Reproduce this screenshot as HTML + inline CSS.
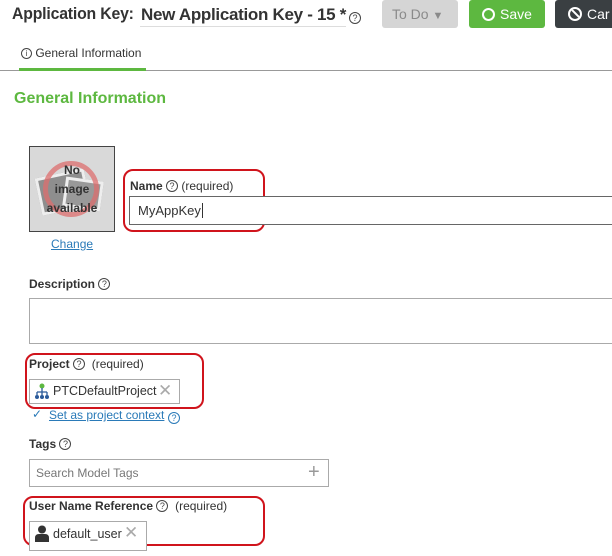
<!DOCTYPE html>
<html><head><meta charset="utf-8"><style>
*{margin:0;padding:0;box-sizing:border-box}
body{width:612px;height:556px;overflow:hidden;background:#fff;font-family:"Liberation Sans",sans-serif;color:#333;position:relative}
.a{position:absolute;white-space:nowrap}
.q{display:inline-block;width:12px;height:12px;border:1px solid #444;border-radius:50%;font-size:9px;line-height:10px;text-align:center;font-weight:normal;color:#444;vertical-align:1px}
.lbl{font-size:12px;color:#333}
.lbl b{font-weight:bold}
.red{position:absolute;border:2px solid #d0141c;border-radius:10px}
.box{position:absolute;border:1px solid #aaa;background:#fff}
</style></head><body>
<div class="a" style="left:12px;top:4px;font-size:17px;font-weight:bold;color:#333;letter-spacing:-0.2px;transform:scaleX(0.93);transform-origin:0 0">Application Key:</div>
<div class="a" style="left:140px;top:6px;width:206px;height:21px;border-bottom:1px solid #ddd"></div>
<div class="a" style="left:141px;top:5px;font-size:17px;font-weight:bold;color:#333;letter-spacing:-0.3px">New Application Key - 15 *</div>
<div class="a" style="left:349px;top:9px"><span class="q">?</span></div>
<div class="a" style="left:382px;top:0;width:76px;height:28px;background:#d5d5d5;border-radius:3px;color:#8a8a8a;font-size:14px;line-height:28px;padding-left:10px">To Do <span style="font-size:11px">&#9660;</span></div>
<div class="a" style="left:469px;top:0;width:76px;height:28px;background:#5db840;border-radius:3px;color:#fff;font-size:14px;line-height:28px;padding-left:13px"><span style="display:inline-block;width:13px;height:13px;border:2px solid #fff;border-radius:50%;vertical-align:-2px;margin-right:5px"></span>Save</div>
<div class="a" style="left:555px;top:0;width:80px;height:28px;background:#3a3f42;border-radius:3px;color:#fff;font-size:14px;line-height:28px;padding-left:13px"><span style="display:inline-block;width:14px;height:14px;border:2px solid #fff;border-radius:50%;vertical-align:-2px;margin-right:5px;position:relative;overflow:hidden"><span style="position:absolute;left:-2px;top:4px;width:16px;height:2px;background:#fff;transform:rotate(45deg)"></span></span>Car</div>
<div class="a" style="left:21px;top:46px;font-size:12px;color:#333"><span class="q" style="width:11px;height:11px;font-size:8px;line-height:9px">i</span> General Information</div>
<div class="a" style="left:0;top:70px;width:612px;height:1px;background:#999"></div>
<div class="a" style="left:19px;top:68px;width:127px;height:3px;background:#5db840"></div>
<div class="a" style="left:14px;top:90px;font-size:16px;font-weight:bold;color:#5db840">General Information</div>
<div class="a" style="left:29px;top:146px;width:86px;height:86px;border:1px solid #444;background:#d9d9d9;overflow:hidden">
<div style="position:absolute;left:8px;top:26px;width:50px;height:38px;background:#8e8e8e;transform:rotate(-12deg);border:3px solid #eee"></div>
<div style="position:absolute;left:34px;top:32px;width:38px;height:30px;background:#999;transform:rotate(8deg);border:3px solid #eee"></div>
<div style="position:absolute;left:13px;top:14px;width:56px;height:56px;border:5px solid rgba(220,110,110,.75);border-radius:50%"></div>
<div style="position:absolute;left:0;top:14px;width:84px;text-align:center;font-size:12px;font-weight:bold;line-height:19px;color:#333">No<br>image<br>available</div>
</div>
<div class="a" style="left:51px;top:237px;font-size:12px;color:#2a7ab8;text-decoration:underline">Change</div>
<div class="red" style="left:123px;top:169px;width:142px;height:63px"></div>
<div class="a lbl" style="left:130px;top:179px"><b>Name</b> <span class="q">?</span> (required)</div>
<div class="box" style="left:129px;top:196px;width:490px;height:29px;border-color:#666"></div>
<div class="a" style="left:138px;top:203px;font-size:13px;color:#333">MyAppKey<span style="border-left:1px solid #333;margin-left:1px"></span></div>
<div class="a lbl" style="left:29px;top:277px"><b>Description</b> <span class="q">?</span></div>
<div class="box" style="left:29px;top:298px;width:590px;height:46px"></div>
<div class="red" style="left:25px;top:353px;width:179px;height:56px"></div>
<div class="a lbl" style="left:29px;top:357px"><b>Project</b> <span class="q">?</span>&nbsp; (required)</div>
<div class="box" style="left:29px;top:379px;width:151px;height:25px"></div>
<svg class="a" style="left:34px;top:383px" width="16" height="17" viewBox="0 0 16 17"><circle cx="8" cy="3" r="2.5" fill="#5db840"/><path d="M8 5v4M3 9h10M3 9v3M8 9v3M13 9v3" stroke="#2a5a9a" stroke-width="1.3" fill="none"/><circle cx="3" cy="14" r="2" fill="#2a5a9a"/><circle cx="8" cy="14" r="2" fill="#2a5a9a"/><circle cx="13" cy="14" r="2" fill="#2a5a9a"/></svg>
<div class="a" style="left:53px;top:384px;font-size:12.5px;color:#333">PTCDefaultProject</div>
<div class="a" style="left:158px;top:381px;font-size:17px;color:#aaa">&#10005;</div>
<div class="a" style="left:32px;top:407px;font-size:12px;color:#2a7ab8">&#10003;</div>
<div class="a" style="left:49px;top:408px;font-size:12px;color:#2a7ab8;text-decoration:underline">Set as project context</div>
<div class="a" style="left:168px;top:409px"><span class="q" style="border-color:#2a7ab8;color:#2a7ab8">?</span></div>
<div class="a lbl" style="left:29px;top:437px"><b>Tags</b> <span class="q">?</span></div>
<div class="box" style="left:29px;top:459px;width:300px;height:28px"></div>
<div class="a" style="left:36px;top:466px;font-size:12px;color:#777">Search Model Tags</div>
<div class="a" style="left:308px;top:461px;font-size:20px;color:#999">+</div>
<div class="red" style="left:23px;top:496px;width:242px;height:50px"></div>
<div class="a lbl" style="left:29px;top:499px"><b>User Name Reference</b> <span class="q">?</span>&nbsp; (required)</div>
<div class="box" style="left:29px;top:521px;width:118px;height:30px"></div>
<svg class="a" style="left:35px;top:525px" width="14" height="17" viewBox="0 0 14 17"><circle cx="7" cy="4.5" r="4" fill="#333"/><path d="M0 17v-4q0-4 4-4h6q4 0 4 4v4z" fill="#333"/></svg>
<div class="a" style="left:53px;top:527px;font-size:12.5px;color:#333">default_user</div>
<div class="a" style="left:124px;top:523px;font-size:17px;color:#aaa">&#10005;</div>
</body></html>
